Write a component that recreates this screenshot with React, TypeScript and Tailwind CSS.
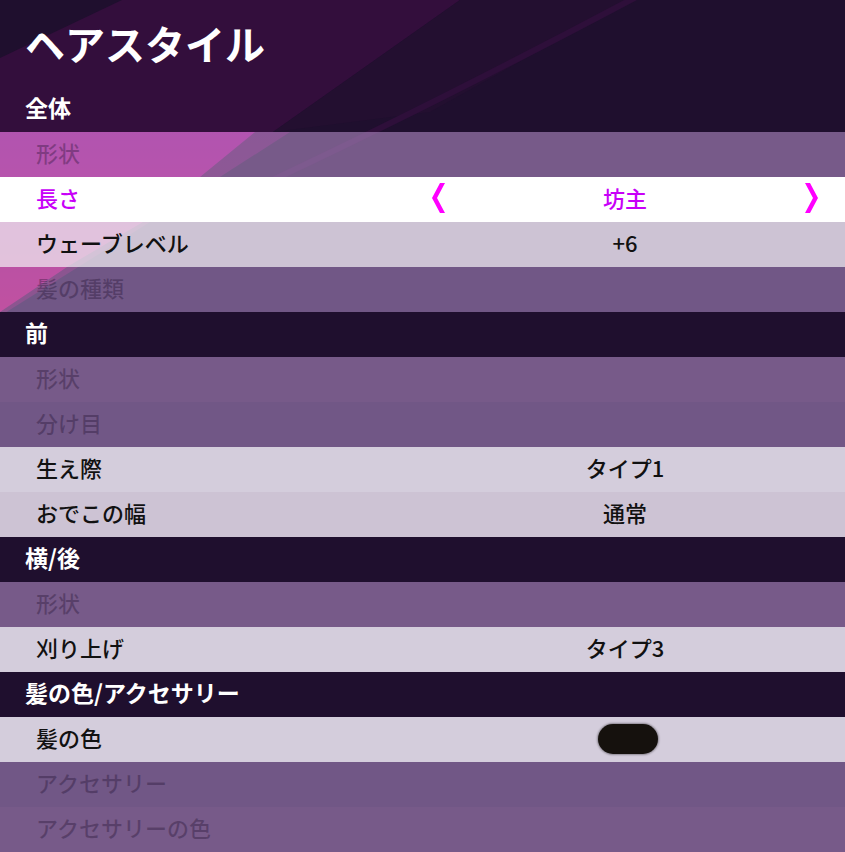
import React from 'react'

type Item = {
  label: string
  header?: boolean
  value?: string
  disabled?: boolean
  light?: boolean
  selected?: boolean
  swatch?: string
}

const rows: Item[] = [
  { label: '形状', disabled: true, light: true },
  { label: '長さ', value: '坊主', selected: true },
  { label: 'ウェーブレベル', value: '+6' },
  { label: '髪の種類', disabled: true },
  { label: '前', header: true },
  { label: '形状', disabled: true, light: true },
  { label: '分け目', disabled: true },
  { label: '生え際', value: 'タイプ1', light: true },
  { label: 'おでこの幅', value: '通常' },
  { label: '横/後', header: true },
  { label: '形状', disabled: true, light: true },
  { label: '刈り上げ', value: 'タイプ3', light: true },
  { label: '髪の色/アクセサリー', header: true },
  { label: '髪の色', swatch: '#15110d', light: true },
  { label: 'アクセサリー', disabled: true },
  { label: 'アクセサリーの色', disabled: true, light: true },
]

// backdrop behind the translucent rows (purple sweep + pink wedge)
function Backdrop() {
  return (
    <svg className="absolute left-0 top-0" width="845" height="320" viewBox="0 0 845 320">
      <defs>
        <linearGradient id="pink" x1="0" y1="132" x2="0" y2="312" gradientUnits="userSpaceOnUse">
          <stop offset="0" stopColor="rgb(176,0,142)" />
          <stop offset="1" stopColor="rgb(228,0,112)" />
        </linearGradient>
      </defs>
      <rect width="845" height="320" fill="#1f0f2e" />
      <polygon points="0,58 122,0 460,0 273,132 0,132" fill="#330e3c" />
      <polygon points="460,0 630,0 430,112 273,132" fill="#230f30" />
      <path d="M230 200 Q 420 112 640 -5" stroke="#2e0f3a" strokeWidth="6" fill="none" />
      <polygon points="0,132 290,132 150,222 0,316" fill="url(#pink)" opacity="0.35" />
      <polygon points="0,132 255,132 200,177 143,222 67,267 0,312" fill="url(#pink)" />
    </svg>
  )
}

function Chevron({ dir }: { dir: 'left' | 'right' }) {
  return (
    <svg width="16" height="30" viewBox="0 0 16 30">
      <polygon
        points={dir === 'left' ? '10,0 15,0 7,15 15,30 10,30 2,15' : '6,0 1,0 9,15 1,30 6,30 14,15'}
        fill="#ff00ff"
      />
    </svg>
  )
}

function Row({ row }: { row: Item }) {
  if (row.header) {
    return (
      <div className="h-[45px] flex items-center pl-[25px] pb-[4px] bg-[#1f0f2e] text-white font-bold text-[23px]">
        {row.label}
      </div>
    )
  }

  let bg = row.light ? 'bg-[rgba(235,229,241,0.89)]' : 'bg-[rgba(227,218,233,0.89)]'
  if (row.disabled) bg = row.light ? 'bg-[rgba(178,140,199,0.6)]' : 'bg-[rgba(169,135,193,0.6)]'
  if (row.selected) bg = 'bg-white'

  const text = row.selected ? 'text-[#c800f8]' : row.disabled ? 'text-[rgba(30,14,46,0.34)]' : 'text-[#111]'

  return (
    <div className={`h-[45px] flex items-center pb-[4px] text-[22px] font-medium ${bg} ${text}`}>
      <div className="w-[430px] pl-[36px]">{row.label}</div>
      <div className="w-[390px] flex items-center justify-between">
        <div className="w-[16px] flex">{row.selected && <Chevron dir="left" />}</div>
        <div className="flex-1 flex justify-center">
          {row.swatch ? (
            <div className="ml-[6px] mt-[3px] w-[60px] h-[30px] rounded-full bg-[#15110d] shadow-[0_0_2px_1px_rgba(0,0,0,0.35)]" />
          ) : (
            row.value
          )}
        </div>
        <div className="w-[16px] flex">{row.selected && <Chevron dir="right" />}</div>
      </div>
    </div>
  )
}

export default function App() {
  return (
    <div
      className="relative w-[845px] h-[852px] overflow-hidden bg-[#1f0f2e]"
      style={{ fontFamily: '"Noto Sans CJK JP", "Noto Sans", sans-serif' }}
    >
      <Backdrop />
      <div className="relative flex flex-col">
        <div className="h-[87px] flex items-center pl-[25px] pb-[2px] text-white font-bold text-[40px] leading-none">
          ヘアスタイル
        </div>
        <div className="h-[45px] flex items-center pl-[25px] pb-[4px] text-white font-bold text-[23px]">全体</div>
        {rows.map((row, i) => (
          <Row key={i} row={row} />
        ))}
      </div>
    </div>
  )
}
